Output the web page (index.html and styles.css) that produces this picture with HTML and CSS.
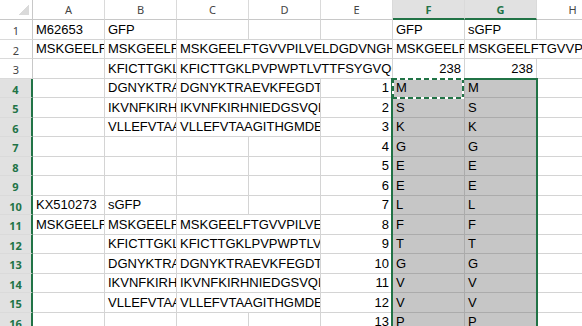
FILE: index.html
```html
<!DOCTYPE html>
<html lang="en">
<head>
    <meta charset="UTF-8">
    <title>Book1 - Excel</title>
    <link rel="stylesheet" href="styles.css">
</head>
<body>
    <div class="book">
    <div class="sheet">
        <!-- column headers -->
        <div class="corner"></div>
        <div class="colhead">A</div>
        <div class="colhead">B</div>
        <div class="colhead">C</div>
        <div class="colhead">D</div>
        <div class="colhead">E</div>
        <div class="colhead on">F</div>
        <div class="colhead on">G</div>
        <div class="colhead">H</div>

        <!-- row 1 -->
        <div class="rowhead">1</div>
        <div class="c">M62653</div>
        <div class="c">GFP</div>
        <div class="c"></div>
        <div class="c"></div>
        <div class="c"></div>
        <div class="c">GFP</div>
        <div class="c">sGFP</div>
        <div class="c"></div>

        <!-- row 2 -->
        <div class="rowhead">2</div>
        <div class="c">MSKGEELFTGVVPILVELDGDVNGHKFSVSGEGEGDATYGKLTL</div>
        <div class="c">MSKGEELFTGVVPILVELDGDVNGHKFSVSGEGEGDATYGKLTL</div>
        <div class="c s3">MSKGEELFTGVVPILVELDGDVNGHKFSVSGEGEGDATYGKLTL</div>
        <div class="c">MSKGEELFTGVVPILVELDGDVNGHKFSVSGEGEGDATYGKLTL</div>
        <div class="c s2">MSKGEELFTGVVPILVELDGDVNGHKFSVSGEGEGDATYGKLTL</div>

        <!-- row 3 -->
        <div class="rowhead">3</div>
        <div class="c"></div>
        <div class="c">KFICTTGKLPVPWPTLVTTFSYGVQCFSRYPDHMKQHDFFKSAMPEGYVQERTIFF</div>
        <div class="c s3">KFICTTGKLPVPWPTLVTTFSYGVQCFSRYPDHMKQHDFFKSAMPEGYVQERTIFF</div>
        <div class="c num">238</div>
        <div class="c num">238</div>
        <div class="c"></div>

        <!-- row 4 -->
        <div class="rowhead on">4</div>
        <div class="c"></div>
        <div class="c">DGNYKTRAEVKFEGDTLVNRIELKGIDFKEDGNILGHKLEYNYNSHNVYIMADKQKNG</div>
        <div class="c s2">DGNYKTRAEVKFEGDTLVNRIELKGIDFKEDGNILGHKLEYNYNSHNVYIMADKQKNG</div>
        <div class="c num">1</div>
        <div class="c sel">M</div>
        <div class="c sel">M</div>
        <div class="c"></div>

        <!-- row 5 -->
        <div class="rowhead on">5</div>
        <div class="c"></div>
        <div class="c">IKVNFKIRHNIEDGSVQLADHYQQNTPIGDGPVLLPDNHYLSTQSALSKDPNEKRDHM</div>
        <div class="c s2">IKVNFKIRHNIEDGSVQLADHYQQNTPIGDGPVLLPDNHYLSTQSALSKDPNEKRDHM</div>
        <div class="c num">2</div>
        <div class="c sel">S</div>
        <div class="c sel">S</div>
        <div class="c"></div>

        <!-- row 6 -->
        <div class="rowhead on">6</div>
        <div class="c"></div>
        <div class="c">VLLEFVTAAGITHGMDELYK</div>
        <div class="c s2">VLLEFVTAAGITHGMDELYK</div>
        <div class="c num">3</div>
        <div class="c sel">K</div>
        <div class="c sel">K</div>
        <div class="c"></div>

        <!-- row 7 -->
        <div class="rowhead on">7</div>
        <div class="c"></div>
        <div class="c"></div>
        <div class="c"></div>
        <div class="c"></div>
        <div class="c num">4</div>
        <div class="c sel">G</div>
        <div class="c sel">G</div>
        <div class="c"></div>

        <!-- row 8 -->
        <div class="rowhead on">8</div>
        <div class="c"></div>
        <div class="c"></div>
        <div class="c"></div>
        <div class="c"></div>
        <div class="c num">5</div>
        <div class="c sel">E</div>
        <div class="c sel">E</div>
        <div class="c"></div>

        <!-- row 9 -->
        <div class="rowhead on">9</div>
        <div class="c"></div>
        <div class="c"></div>
        <div class="c"></div>
        <div class="c"></div>
        <div class="c num">6</div>
        <div class="c sel">E</div>
        <div class="c sel">E</div>
        <div class="c"></div>

        <!-- row 10 -->
        <div class="rowhead on">10</div>
        <div class="c">KX510273</div>
        <div class="c">sGFP</div>
        <div class="c"></div>
        <div class="c"></div>
        <div class="c num">7</div>
        <div class="c sel">L</div>
        <div class="c sel">L</div>
        <div class="c"></div>

        <!-- row 11 -->
        <div class="rowhead on">11</div>
        <div class="c">MSKGEELFTGVVPILVELDGDVNGHKFSVSGEGEGDATYGKLTL</div>
        <div class="c">MSKGEELFTGVVPILVELDGDVNGHKFSVSGEGEGDATYGKLTL</div>
        <div class="c s2">MSKGEELFTGVVPILVELDGDVNGHKFSVSGEGEGDATYGKLTL</div>
        <div class="c num">8</div>
        <div class="c sel">F</div>
        <div class="c sel">F</div>
        <div class="c"></div>

        <!-- row 12 -->
        <div class="rowhead on">12</div>
        <div class="c"></div>
        <div class="c">KFICTTGKLPVPWPTLVTTFSYGVQCFSRYPDHMKQHDFFKSAMPEGYVQERTIFF</div>
        <div class="c s2">KFICTTGKLPVPWPTLVTTFSYGVQCFSRYPDHMKQHDFFKSAMPEGYVQERTIFF</div>
        <div class="c num">9</div>
        <div class="c sel">T</div>
        <div class="c sel">T</div>
        <div class="c"></div>

        <!-- row 13 -->
        <div class="rowhead on">13</div>
        <div class="c"></div>
        <div class="c">DGNYKTRAEVKFEGDTLVNRIELKGIDFKEDGNILGHKLEYNYNSHNVYIMADKQKNG</div>
        <div class="c s2">DGNYKTRAEVKFEGDTLVNRIELKGIDFKEDGNILGHKLEYNYNSHNVYIMADKQKNG</div>
        <div class="c num">10</div>
        <div class="c sel">G</div>
        <div class="c sel">G</div>
        <div class="c"></div>

        <!-- row 14 -->
        <div class="rowhead on">14</div>
        <div class="c"></div>
        <div class="c">IKVNFKIRHNIEDGSVQLADHYQQNTPIGDGPVLLPDNHYLSTQSALSKDPNEKRDHM</div>
        <div class="c s2">IKVNFKIRHNIEDGSVQLADHYQQNTPIGDGPVLLPDNHYLSTQSALSKDPNEKRDHM</div>
        <div class="c num">11</div>
        <div class="c sel">V</div>
        <div class="c sel">V</div>
        <div class="c"></div>

        <!-- row 15 -->
        <div class="rowhead on">15</div>
        <div class="c"></div>
        <div class="c">VLLEFVTAAGITHGMDELYK</div>
        <div class="c s2">VLLEFVTAAGITHGMDELYK</div>
        <div class="c num">12</div>
        <div class="c sel">V</div>
        <div class="c sel">V</div>
        <div class="c"></div>

        <!-- row 16 -->
        <div class="rowhead on">16</div>
        <div class="c"></div>
        <div class="c"></div>
        <div class="c"></div>
        <div class="c"></div>
        <div class="c num">13</div>
        <div class="c sel">P</div>
        <div class="c sel">P</div>
        <div class="c"></div>
    </div>

    <!-- selected range F4:G16 and the copied cell F4, laid over the sheet -->
    <div class="marks">
        <div class="selection"></div>
        <div class="copy"></div>
    </div>
    </div>
</body>
</html>
```

FILE: styles.css
```css
body {
    margin: 0;
    overflow: hidden;
    background-color: #fff;
    font-family: "Liberation Sans", Arial, sans-serif;
}
.book {
    display: grid;
}
.sheet,
.marks {
    grid-area: 1 / 1;
    display: grid;
    grid-template-columns: 33px repeat(8, 72px);
    grid-template-rows: 20px repeat(8, 20px 19px);
    grid-auto-rows: 20px;
}
.sheet > div {
    box-sizing: border-box;
}
.corner {
    border-right: 1px solid #c8c8c8;
    border-bottom: 1px solid #c8c8c8;
    background: linear-gradient(135deg, transparent 50%, #dadada 50%) no-repeat right 3px bottom 4px / 10px 10px;
}
.colhead {
    display: flex;
    align-items: center;
    justify-content: center;
    font-family: "Noto Sans", sans-serif;
    font-size: 11px;
    color: #444;
    border-right: 1px solid #dadada;
    border-bottom: 1px solid #c8c8c8;
}
.colhead.on {
    background-color: #e1e1e1;
    color: #217346;
    font-weight: bold;
    border-bottom: 2px solid #217346;
}
.rowhead {
    display: flex;
    align-items: center;
    justify-content: center;
    padding-top: 2px;
    font-family: "Noto Sans", sans-serif;
    font-size: 11px;
    color: #444;
    border-right: 1px solid #c8c8c8;
    border-bottom: 1px solid #dadada;
}
.rowhead.on {
    background-color: #e1e1e1;
    color: #217346;
    font-weight: bold;
    border-right: 2px solid #217346;
}
.c {
    display: flex;
    align-items: flex-end;
    padding: 0 3px 2px 3px;
    font-size: 13px;
    line-height: 15px;
    color: #000;
    white-space: nowrap;
    overflow: hidden;
    border-right: 1px solid #d4d4d4;
    border-bottom: 1px solid #d4d4d4;
}
.s2 {
    grid-column: span 2;
}
.s3 {
    grid-column: span 3;
}
.num {
    justify-content: flex-end;
}
.sel {
    background-color: #c6c6c6;
    border-color: #ababab;
}
.selection {
    grid-column: 7 / 9;
    grid-row: 5 / 19;
    margin: -1px -1px 0 -2px;
    border: 2px solid #217346;
}
.copy {
    grid-column: 7;
    grid-row: 5;
    margin: -1px 1px -1px -1px;
    background:
        repeating-linear-gradient(90deg, #217346 0 5px, #fff 5px 8px) top left / 100% 2px no-repeat,
        repeating-linear-gradient(90deg, #217346 0 5px, #fff 5px 8px) bottom left / 100% 2px no-repeat,
        repeating-linear-gradient(180deg, #217346 0 5px, #fff 5px 8px) top left / 2px 100% no-repeat,
        repeating-linear-gradient(180deg, #217346 0 5px, #fff 5px 8px) top right / 2px 100% no-repeat;
}
```
